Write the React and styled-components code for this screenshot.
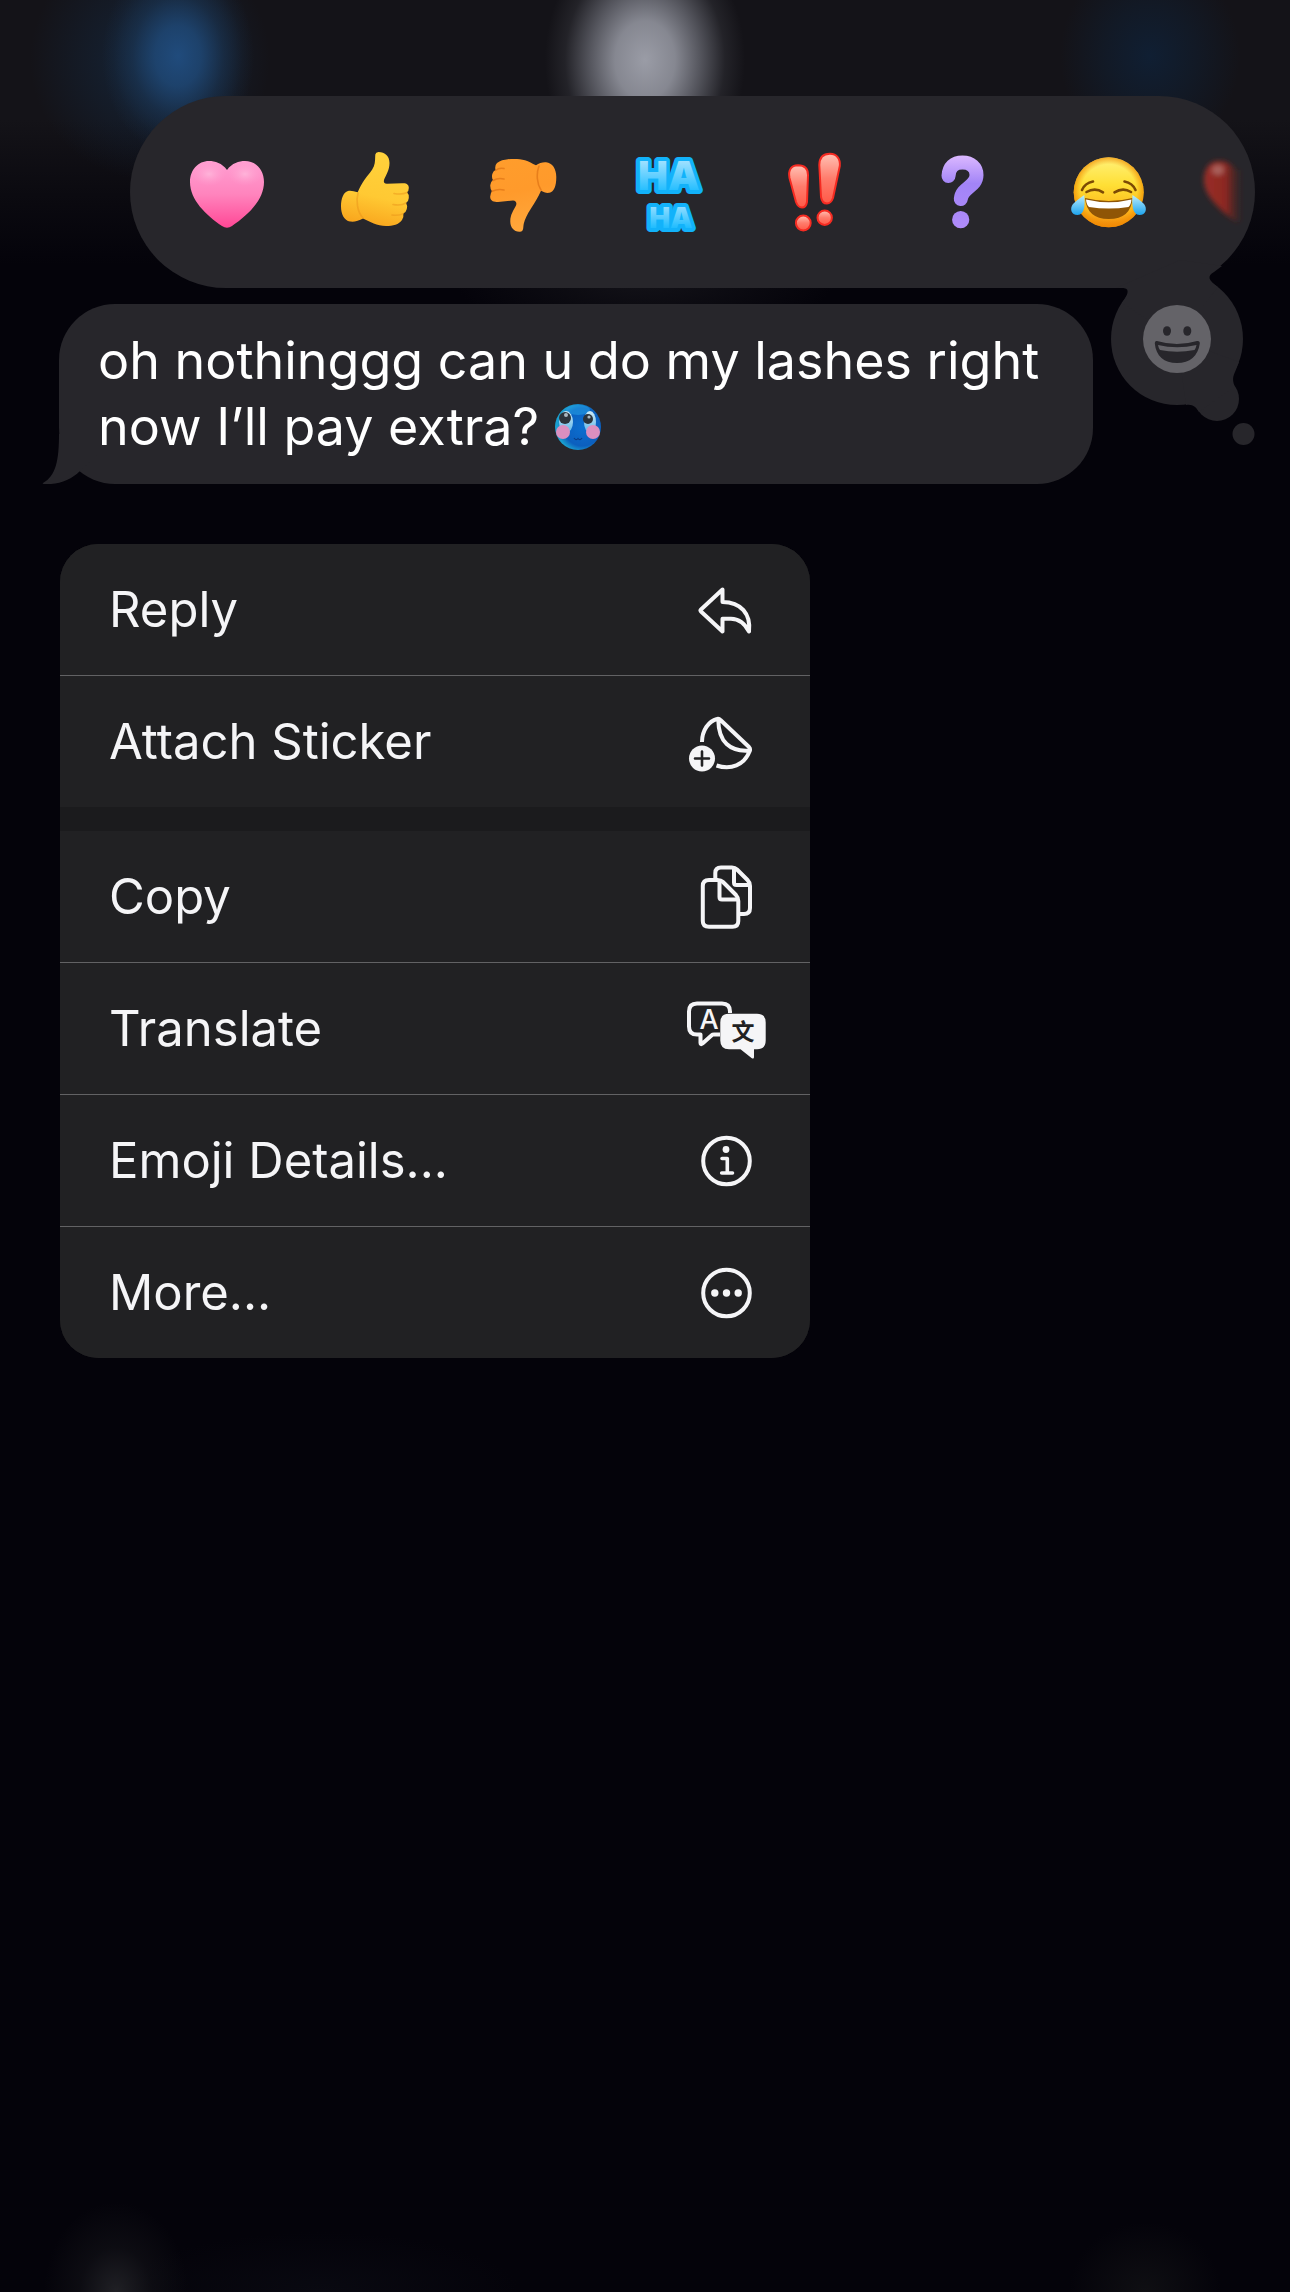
import React from "react";
import styled, { createGlobalStyle } from "styled-components";

const GlobalStyle = createGlobalStyle`
  body {
    margin: 0;
    background-color: #04030a;
  }

  * {
    box-sizing: border-box;
  }

  button {
    font: inherit;
    color: inherit;
    background: none;
    border: 0;
    padding: 0;
    cursor: pointer;
  }
`;

/* ---------- reactions ---------- */

const PinkHeart = () => (
  <Glyph viewBox="0 0 84 84">
    <defs>
      <linearGradient id="pinkHeart" x1="0" y1="0" x2="0" y2="1">
        <stop offset="0" stopColor="#ff9fd2" />
        <stop offset="0.5" stopColor="#ff84bd" />
        <stop offset="1" stopColor="#ff4795" />
      </linearGradient>
      <radialGradient id="pinkShine">
        <stop offset="0" stopColor="#ffc0e0" stopOpacity="0.7" />
        <stop offset="1" stopColor="#ffa0d0" stopOpacity="0" />
      </radialGradient>
    </defs>
    <path
      d="M42 20C47 13 54 11 60 11C71 11 79 20 79 32C79 50 63 65 47 76Q42 79.5 37 76C21 65 5 50 5 32C5 20 13 11 24 11C30 11 37 13 42 20Z"
      fill="url(#pinkHeart)"
    />
    <ellipse cx="24" cy="24" rx="17" ry="12" fill="url(#pinkShine)" />
    <ellipse cx="60" cy="24" rx="17" ry="12" fill="url(#pinkShine)" />
  </Glyph>
);

const ThumbsUp = () => (
  <Glyph viewBox="0 0 84 84">
    <defs>
      <linearGradient id="thumbUp" x1="0.6" y1="0" x2="0.4" y2="1">
        <stop offset="0" stopColor="#ffd23c" />
        <stop offset="0.6" stopColor="#ffc933" />
        <stop offset="1" stopColor="#f9a51d" />
      </linearGradient>
    </defs>
    <path
      d="M46.5 2C53 2 57.5 6 57.5 13C57.5 20 54 25 52 30Q51 33.5 55 33.8L70 33.2C75 32.8 77 35 76.8 38Q76.8 41 75 42.3Q77 44 76.8 48Q76.6 51.5 74 53Q75.6 55 74.8 59Q74 62.5 71.3 63.6Q72 67 70 70C67 74.5 61 76 54 76C45 75.8 38 72 31 68.5C27 71 22 72 18 71.5C12 70.5 9 64 9 56.5C9 48 11.5 42.5 16 41C19 40.3 22 41.4 25.7 42.3C27.5 38 30 33.5 32.3 30C36 24.5 40 21 41.8 16.5C43.5 12 43 7.5 43.3 4.5Q43.8 2.2 46.5 2Z"
      fill="url(#thumbUp)"
    />
    <path
      d="M26 43C24 50 25 62 31 68M62 43.5Q70 45 75 42.5M61 54.5Q69 56 74 53M60 65Q67 66 71.3 63.6"
      fill="none"
      stroke="#e9941a"
      strokeWidth="1.6"
      strokeLinecap="round"
      opacity="0.5"
    />
  </Glyph>
);

const ThumbsDown = () => (
  <Glyph viewBox="0 0 84 84">
    <defs>
      <linearGradient id="thumbDown" x1="0" y1="0" x2="0.2" y2="1">
        <stop offset="0" stopColor="#ff9d2c" />
        <stop offset="0.5" stopColor="#ff9a2b" />
        <stop offset="1" stopColor="#ffa63a" />
      </linearGradient>
    </defs>
    <path
      d="M16.5 20Q15.5 15.5 18 13C21 10.5 25 9.6 29 9.2C35 8.8 41 8.8 46 10.2C50 11.4 53 13.5 57 15.2C60 13 64 12 67 12.3C73.5 13 77.3 19 77.3 27C77.3 36 75 42 70.3 42.8C67 43.2 64.5 42 62 40.8C59.5 47 55.5 53 52 58.5C48 64.5 46 69 44.7 74C44 78 44.8 81.5 41 81.7C35 82 31.5 77.5 31.3 72C31 65 34.5 60.5 37 55.5Q38.5 51 34 50.4L19 52C14 52.5 11 50.5 11.2 46.5Q11.4 43 13 41.3Q11 39 11.3 35Q11.8 31.5 14 30Q12.4 27.5 13.3 24Q14.2 21 16.5 20Z"
      fill="url(#thumbDown)"
    />
    <path
      d="M60 16C57 24 58 34 62 40M16.5 20.5Q20 17.5 25 18.5M14 30.5Q19 27.5 25 29M13 41.3Q19 38.5 25 40"
      fill="none"
      stroke="#d96d10"
      strokeWidth="1.6"
      strokeLinecap="round"
      opacity="0.6"
    />
  </Glyph>
);

const Haha = () => (
  <Glyph viewBox="0 0 84 84">
    <defs>
      <linearGradient id="haha" x1="0" y1="6" x2="0" y2="82" gradientUnits="userSpaceOnUse">
        <stop offset="0.05" stopColor="#a4e2ff" />
        <stop offset="0.48" stopColor="#1dbcff" />
        <stop offset="0.58" stopColor="#1dbcff" />
        <stop offset="0.64" stopColor="#9bdfff" />
        <stop offset="0.95" stopColor="#1dbcff" />
      </linearGradient>
    </defs>
    <HahaText x="43" y="40" $size={40}>
      HA
    </HahaText>
    <HahaText x="45" y="78" $size={28}>
      HA
    </HahaText>
  </Glyph>
);

const Exclaim = () => (
  <Glyph viewBox="0 0 84 84">
    <defs>
      <linearGradient id="exclaim" x1="0" y1="0" x2="0" y2="1">
        <stop offset="0" stopColor="#ffc1b4" />
        <stop offset="0.5" stopColor="#ff7c6c" />
        <stop offset="1" stopColor="#ff5a48" />
      </linearGradient>
    </defs>
    <g fill="url(#exclaim)" stroke="#f52b22" strokeWidth="2">
      <path d="M25 15.3C32 15.3 35 19 35 25L34 52Q33 57.5 29 57.5Q25 57.5 23 52L16.5 28C15 20 18 15.5 25 15.3Z" />
      <path d="M57 3.8C64 4 67.5 9 66.8 16L60 48Q58 53.5 54 53.5Q49 53.5 48 47L46.3 15C46.5 8 50 3.7 57 3.8Z" />
      <circle cx="30.3" cy="73" r="7.4" />
      <circle cx="51.7" cy="67.7" r="7.2" />
    </g>
  </Glyph>
);

const Question = () => (
  <Glyph viewBox="0 0 84 84">
    <defs>
      <linearGradient id="question" x1="0" y1="0" x2="0" y2="84" gradientUnits="userSpaceOnUse">
        <stop offset="0.08" stopColor="#d9b6ff" />
        <stop offset="0.4" stopColor="#a284f7" />
        <stop offset="1" stopColor="#b18cfa" />
      </linearGradient>
    </defs>
    <path
      d="M28.5 26C29 17 34 12.5 42.5 12.5C51 12.5 56.5 17.5 56.5 25C56.5 37 42 37 40.8 49"
      fill="none"
      stroke="url(#question)"
      strokeWidth="14"
      strokeLinecap="round"
    />
    <circle cx="40.7" cy="69.7" r="8.6" fill="url(#question)" />
  </Glyph>
);

const Joy = () => (
  <Glyph viewBox="0 0 84 84">
    <defs>
      <linearGradient id="joyFace" x1="0" y1="0" x2="0" y2="1">
        <stop offset="0" stopColor="#fff27a" />
        <stop offset="0.4" stopColor="#ffdf35" />
        <stop offset="0.75" stopColor="#fdb71c" />
        <stop offset="1" stopColor="#f0880c" />
      </linearGradient>
      <radialGradient id="joyEdge">
        <stop offset="0.8" stopColor="#f08a00" stopOpacity="0" />
        <stop offset="1" stopColor="#f08a00" stopOpacity="0.7" />
      </radialGradient>
      <linearGradient id="tear" x1="0" y1="0" x2="0" y2="1">
        <stop offset="0" stopColor="#bdeeff" />
        <stop offset="1" stopColor="#1ea4ee" />
      </linearGradient>
    </defs>
    <circle cx="41.7" cy="42.3" r="35" fill="url(#joyFace)" />
    <circle cx="41.7" cy="42.3" r="35" fill="url(#joyEdge)" />
    <path
      d="M15 40Q18 33 26 31.5M68.5 40Q65.5 33 57.5 31.5M19.5 42Q28 37 36 42.3M47.5 42.3Q56 37 64 42"
      fill="none"
      stroke="#7c4a05"
      strokeWidth="2.6"
      strokeLinecap="round"
    />
    <path d="M18 48Q42 54 65.5 48Q64 69 41.7 69Q20 69 18 48Z" fill="#8f5506" />
    <path d="M19 49.5Q42 55 64.5 49.5Q64 55 61.5 57Q42 60 22 57Q19.5 55 19 49.5Z" fill="#fff" />
    <path d="M17.3 45C18 55 18 64.5 10.5 65C4 65 2.5 58.5 6 54Q10 50 17.3 45Z" fill="url(#tear)" />
    <path d="M65.5 45C65 55 65 64.5 72.5 65C79 65 80.5 58.5 77 54Q73 50 65.5 45Z" fill="url(#tear)" />
  </Glyph>
);

const FadedHeart = () => (
  <Glyph viewBox="0 0 84 84">
    <defs>
      <linearGradient id="fadedHeart" x1="-12" y1="0" x2="28" y2="0" gradientUnits="userSpaceOnUse">
        <stop offset="0" stopColor="#9a2f29" />
        <stop offset="0.6" stopColor="#8c2720" />
        <stop offset="1" stopColor="#5a2423" stopOpacity="0" />
      </linearGradient>
      <filter id="softEdge" x="-30%" y="-30%" width="160%" height="160%">
        <feGaussianBlur stdDeviation="2.5" />
      </filter>
    </defs>
    <g filter="url(#softEdge)">
      <path
        d="M22 20C18 14 12 11 5 11C-4 11 -10 18 -10 30C-10 46 6 60 22 72L30 72V20Z"
        fill="url(#fadedHeart)"
      />
      <ellipse cx="4" cy="20" rx="6" ry="5" fill="#b98580" opacity="0.6" />
    </g>
  </Glyph>
);

const reactions = [
  { label: "Heart", Icon: PinkHeart },
  { label: "Thumbs up", Icon: ThumbsUp },
  { label: "Thumbs down", Icon: ThumbsDown },
  { label: "Haha", Icon: Haha },
  { label: "Exclamation", Icon: Exclaim },
  { label: "Question", Icon: Question },
  { label: "Tears of joy", Icon: Joy },
  { label: "Red heart", Icon: FadedHeart },
];

/* ---------- menu icons ---------- */

const ReplyIcon = () => (
  <MenuGlyph viewBox="0 0 84 72">
    <path d="M38.5 15.5L17 35.5Q16 36.5 17 37.5L38.5 57.5V44.8H47C56 45 61 50 65 57.5C67 40 57 28 38.5 28Z" />
  </MenuGlyph>
);

const StickerIcon = () => (
  <MenuGlyph viewBox="0 0 84 72">
    <path
      d="M18 36C18 24 25 15 33 13Q35 12.4 36.5 14L65 41Q66.8 43 65.5 45.5C60 59 47 64.5 32.5 59.5M34.3 14C34.5 36 46 46 65.5 44.5"
      strokeLinecap="butt"
    />
    <circle cx="18" cy="52.5" r="13" fill="#f5f5f7" stroke="none" />
    <path d="M11 52.5H25M18 45.5V59.5" stroke="#212123" strokeWidth="2.6" />
  </MenuGlyph>
);

const CopyIcon = () => (
  <MenuGlyph viewBox="0 0 84 72">
    <path d="M31.3 17.5V12Q31.3 6.5 37 6.5H48Q51 6.5 53 8.5L63.5 19Q66 21.5 66 25V47Q66 53 60 53H56" strokeLinecap="butt" />
    <path d="M50 7.5V21.5Q50 24 52.5 24H65" />
    <path d="M25 19H33.5Q37 19 39 21L52 34Q54.3 36.5 54.3 40V60Q54.3 65.8 48.5 65.8H25Q18.8 65.8 18.8 60V25Q18.8 19 25 19Z" />
    <path d="M35.5 20V36Q35.5 38.5 38 38.5H53" />
  </MenuGlyph>
);

const TranslateIcon = () => (
  <MenuGlyph viewBox="0 0 84 72">
    <path
      d="M46 20V18.5Q46 10.5 38 10.5H13Q5 10.5 5 18.5V33.5Q5 41.5 13 41.5H16.5V50Q16.5 52 18.5 50.5L28 42Q28.5 41.5 30 41.5H36"
      strokeLinecap="butt"
    />
    <path
      d="M45 20.8H73Q81.7 20.8 81.7 29.5V47.5Q81.7 56.2 73 56.2H70V64Q70 66.5 67.5 65L56.5 56.2H45Q36.3 56.2 36.3 47.5V29.5Q36.3 20.8 45 20.8Z"
      fill="#f5f5f7"
      stroke="none"
    />
    <IconLetter x="25" y="36" $size={27}>
      A
    </IconLetter>
    <IconLetter x="59" y="47" $size={23} $dark>
      文
    </IconLetter>
  </MenuGlyph>
);

const InfoIcon = () => (
  <MenuGlyph viewBox="0 0 84 72">
    <circle cx="42.5" cy="36" r="23.3" />
    <circle cx="42" cy="24.5" r="3.4" fill="#f5f5f7" stroke="none" />
    <path d="M38 33.5H43.3V48M37.7 48H48.5" strokeWidth="3.6" />
  </MenuGlyph>
);

const MoreIcon = () => (
  <MenuGlyph viewBox="0 0 84 72">
    <circle cx="42.5" cy="36" r="23.3" />
    <g fill="#f5f5f7" stroke="none">
      <circle cx="30.8" cy="36" r="3.7" />
      <circle cx="42.5" cy="36" r="3.7" />
      <circle cx="54.2" cy="36" r="3.7" />
    </g>
  </MenuGlyph>
);

const menuGroups = [
  [
    { label: "Reply", Icon: ReplyIcon },
    { label: "Attach Sticker", Icon: StickerIcon },
  ],
  [
    { label: "Copy", Icon: CopyIcon },
    { label: "Translate", Icon: TranslateIcon },
    { label: "Emoji Details...", Icon: InfoIcon },
    { label: "More...", Icon: MoreIcon },
  ],
];

const ShyFace = () => (
  <InlineEmoji viewBox="0 0 48 48" role="img" aria-label="blue shy face">
    <defs>
      <radialGradient id="shyFace" cx="0.6" cy="0.5" r="0.55">
        <stop offset="0" stopColor="#0b6fd0" />
        <stop offset="0.75" stopColor="#0c5fbe" />
        <stop offset="1" stopColor="#1a9fd0" />
      </radialGradient>
      <linearGradient id="shyEye" x1="0" y1="0" x2="0" y2="1">
        <stop offset="0" stopColor="#cfeaf5" />
        <stop offset="1" stopColor="#5ab4e8" />
      </linearGradient>
    </defs>
    <circle cx="24" cy="24" r="23" fill="url(#shyFace)" />
    <ellipse cx="24" cy="7" rx="12" ry="5" fill="#27a7ea" opacity="0.5" />
    <ellipse cx="12" cy="19" rx="7" ry="11" fill="url(#shyEye)" />
    <ellipse cx="36" cy="19" rx="6" ry="11" fill="url(#shyEye)" />
    <circle cx="11" cy="15" r="6" fill="#2b333b" />
    <circle cx="34" cy="16" r="5" fill="#2b333b" />
    <circle cx="12" cy="12" r="2" fill="#aab8c0" />
    <circle cx="35" cy="14" r="1.6" fill="#aab8c0" />
    <circle cx="9" cy="29" r="7" fill="#db8fc0" />
    <circle cx="39" cy="29" r="7" fill="#db8fc0" />
    <path d="M20 35Q22 38 24 35.5Q26 38 28 35" fill="none" stroke="#0a3d86" strokeWidth="1.2" />
  </InlineEmoji>
);

const ThoughtBubble = () => (
  <ThoughtButton aria-label="More emoji">
    <ThoughtSvg viewBox="0 0 170 200">
      <g fill="#27262b">
        <circle cx="77" cy="89" r="66" />
        <circle cx="117" cy="149" r="22" />
        <circle cx="143.5" cy="184" r="11" />
        <path d="M16 38H22C29 38 30 42 22 53L77 89L118 37C108 30 107 26 114 22L122 16L80 10Z" />
        <path d="M86 155C93 154 96 157 99 162L117 149L135 137C133 132 132 128 135 122L139 112L77 89Z" />
      </g>
      <circle cx="77" cy="89" r="34" fill="#646368" />
      <g fill="#27262b">
        <ellipse cx="67" cy="81" rx="4" ry="4.8" />
        <ellipse cx="87.3" cy="81" rx="4" ry="4.8" />
        <path d="M57 91Q77 97 97 91Q100 90.5 99.8 93.5C98 106 90 113 77 113C64 113 56 106 54.8 93.5Q54.5 90.5 57 91Z" />
      </g>
      <path d="M58 95Q77 99.5 96.5 95Q96 98 94.5 100Q77 103.5 60 100Q58.5 98 58 95Z" fill="#646368" />
    </ThoughtSvg>
  </ThoughtButton>
);

const App = () => {
  return (
    <>
      <GlobalStyle />
      <Page>
        <ReactionBar>
          <ReactionList>
            {reactions.map(({ label, Icon }) => (
              <ReactionButton key={label} aria-label={label}>
                <Icon />
              </ReactionButton>
            ))}
          </ReactionList>
          <ThoughtBubble />
        </ReactionBar>

        <Message>
          <Tail viewBox="0 0 60 50">
            <path d="M17 0C17 26 14 42 1 49Q0 50 2 50C16 51 29 46 38 37L56 20V0Z" fill="#27262b" />
          </Tail>
          <MessageText>
            oh nothinggg can u do my lashes right now I’ll pay extra? <ShyFace />
          </MessageText>
        </Message>

        <Menu>
          {menuGroups.map((items) => (
            <MenuGroup key={items[0].label}>
              {items.map(({ label, Icon }) => (
                <li key={label}>
                  <MenuItem>
                    <span>{label}</span>
                    <Icon />
                  </MenuItem>
                </li>
              ))}
            </MenuGroup>
          ))}
        </Menu>
      </Page>
    </>
  );
};

export default App;

const Page = styled.main`
  min-height: 100vh;
  padding-top: 96px;
  overflow: hidden;
  font-family: "Inter", sans-serif;
  background:
    radial-gradient(
      ellipse 100px 130px at 50% 60px,
      #9a9ca6 0%,
      #92949ee6 30%,
      #80828c99 55%,
      #60626a33 80%,
      transparent 100%
    ),
    radial-gradient(
      ellipse 76px 100px at 178px 56px,
      #204b7c 0%,
      #1f4876d9 30%,
      #1c3c6080 60%,
      #1c3c6022 85%,
      transparent 100%
    ),
    radial-gradient(ellipse 120px 120px at 150px 60px, #15304e99, transparent),
    radial-gradient(ellipse 90px 100px at calc(100% - 140px) 56px, #101f33, #10203480 50%, transparent),
    radial-gradient(ellipse 190px 60px at 50% 280px, #131218, transparent),
    radial-gradient(ellipse 72px 90px at 116px 100%, #202025, #15151a80 50%, transparent),
    radial-gradient(ellipse 200px 60px at 320px 100%, #090911, transparent),
    radial-gradient(ellipse 76px 70px at calc(100% - 145px) 100%, #0f0f13, transparent),
    linear-gradient(#141318 0px, #141318 120px, #0b0a10 195px, #04030a 265px);
`;

const ReactionBar = styled.div`
  position: relative;
  margin: 0 35px 0 130px;
`;

const ReactionList = styled.div`
  display: flex;
  align-items: center;
  gap: 63px;
  height: 192px;
  padding-left: 55px;
  border-radius: 96px;
  background-color: #27262b;
  overflow: hidden;
`;

const ReactionButton = styled.button`
  flex: none;
  width: 84px;
  height: 84px;
`;

const Glyph = styled.svg`
  display: block;
  width: 84px;
  height: 84px;
  overflow: visible;
`;

const HahaText = styled.text`
  font-family: "Inter", sans-serif;
  font-size: ${({ $size }) => $size}px;
  font-weight: 900;
  text-anchor: middle;
  fill: url(#haha);
  stroke: #12b2fa;
  stroke-width: 8px;
  stroke-linejoin: round;
  paint-order: stroke;
`;

const ThoughtButton = styled.button`
  position: absolute;
  right: -15px;
  bottom: -162px;
  width: 170px;
  height: 200px;
`;

const ThoughtSvg = styled.svg`
  display: block;
  width: 100%;
  height: 100%;
`;

const Message = styled.div`
  position: relative;
  margin: 16px 197px 0 59px;
  padding: 24px 39px;
  border-radius: 56px;
  background-color: #27262b;
`;

const MessageText = styled.p`
  margin: 0;
  color: #ffffff;
  font-size: 52px;
  line-height: 66px;
`;

const Tail = styled.svg`
  position: absolute;
  left: -17px;
  bottom: 0;
  width: 60px;
  height: 50px;
`;

const InlineEmoji = styled.svg`
  width: 48px;
  height: 48px;
  vertical-align: -6px;
`;

const Menu = styled.nav`
  display: flex;
  flex-direction: column;
  gap: 24px;
  width: 750px;
  max-width: calc(100% - 120px);
  margin: 60px 60px 0;
  border-radius: 38px;
  background-color: #1b1b1d;
  overflow: hidden;
`;

const MenuGroup = styled.ul`
  margin: 0;
  padding: 0;
  list-style: none;
  background-color: #212123;

  li + li {
    border-top: 1px solid #626264;
  }
`;

const MenuItem = styled.button`
  display: flex;
  align-items: center;
  justify-content: space-between;
  width: 100%;
  height: 131px;
  padding: 0 42px 0 49px;
  color: #f5f5f7;
  font-size: 49px;
  line-height: 66px;
  text-align: left;
`;

const MenuGlyph = styled.svg`
  flex: none;
  width: 84px;
  height: 72px;
  fill: none;
  stroke: #f5f5f7;
  stroke-width: 4px;
  stroke-linecap: round;
  stroke-linejoin: round;
`;

const IconLetter = styled.text`
  font-family: "Inter", "Noto Sans CJK SC", sans-serif;
  font-size: ${({ $size }) => $size}px;
  font-weight: ${({ $dark }) => ($dark ? 700 : 500)};
  text-anchor: middle;
  fill: ${({ $dark }) => ($dark ? "#212123" : "#f5f5f7")};
  stroke: none;
`;
